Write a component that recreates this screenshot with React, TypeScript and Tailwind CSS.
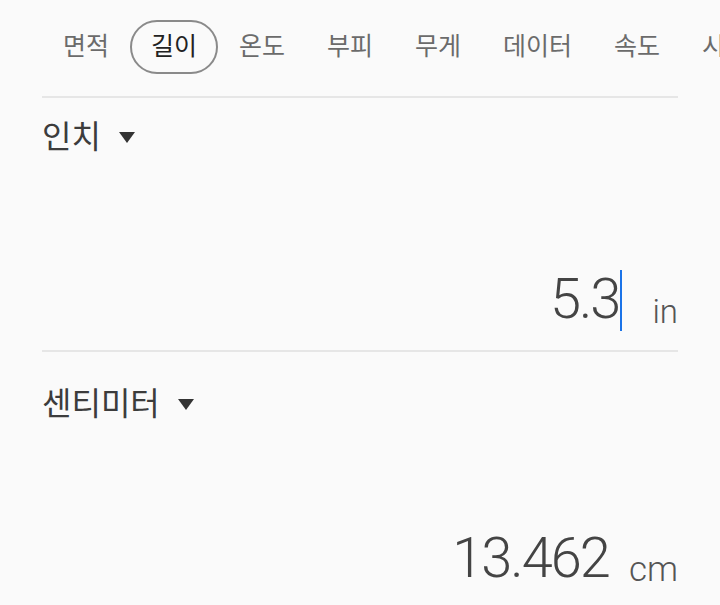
const tabs = ['면적', '길이', '온도', '부피', '무게', '데이터', '속도', '시간']

const kr = { fontFamily: 'Roboto, "Noto Sans CJK KR", sans-serif' }
const light = { fontFamily: '"Roboto Light", Roboto, sans-serif' }

function Caret() {
    return (
        <svg width="16" height="11" viewBox="0 0 16 11" className="ml-[18px]">
            <path d="M0 0 L16 0 L8 11 Z" fill="#333" />
        </svg>
    )
}

export default function App() {
    return (
        <div className="w-[720px] h-[605px] overflow-hidden bg-[#fafafa]" style={kr}>
            {/* Tabs */}
            <div className="px-[42px] pt-[20px]">
                <div className="flex h-[54px] items-center whitespace-nowrap">
                    {tabs.map((t) => (
                        <div
                            key={t}
                            className={
                                (t.length === 3 ? 'w-[111px] ' : 'w-[88px] ') +
                                (t === '길이'
                                    ? 'h-[54px] flex items-center justify-center shrink-0 rounded-full border-2 border-[#8a8a8a] text-[25px] text-[#222]'
                                    : 'h-[54px] flex items-center justify-center shrink-0 text-[25px] text-[#6b6b6b]')
                            }
                        >
                            {t}
                        </div>
                    ))}
                </div>
                <div className="mt-[22px] h-[2px] bg-[#e6e6e6]" />
            </div>

            {/* From unit */}
            <div className="px-[42px]">
                <div className="h-[80px] flex items-center pb-[2px]">
                    <span className="text-[32px] text-[#3c3c3c]">인치</span>
                    <Caret />
                </div>
                <div className="h-[172px] flex items-end justify-end pb-[23px]">
                    <div className="flex items-end" style={light}>
                        <span className="text-[56px] leading-none font-light text-[#444] tracking-[-2px] mr-[-2px]">5.3</span>
                        <span className="w-[2px] h-[61px] bg-[#1a73e8] ml-[3px] mb-[-4px]" />
                        <span className="ml-[30px] text-[33px] leading-none font-light text-[#555] mb-[-1px]">in</span>
                    </div>
                </div>
                <div className="h-[2px] bg-[#e6e6e6]" />
            </div>

            {/* To unit */}
            <div className="px-[42px]">
                <div className="h-[112px] flex items-center pb-[8px]">
                    <span className="text-[32px] text-[#3c3c3c]">센티미터</span>
                    <Caret />
                </div>
                <div className="mt-[66px] flex items-end justify-end" style={light}>
                    <span className="text-[56px] leading-none font-light text-[#444] tracking-[-2px]">13.462</span>
                    <span className="ml-[20px] text-[35px] leading-none font-light text-[#555] mb-[-1px]">cm</span>
                </div>
            </div>
        </div>
    )
}
